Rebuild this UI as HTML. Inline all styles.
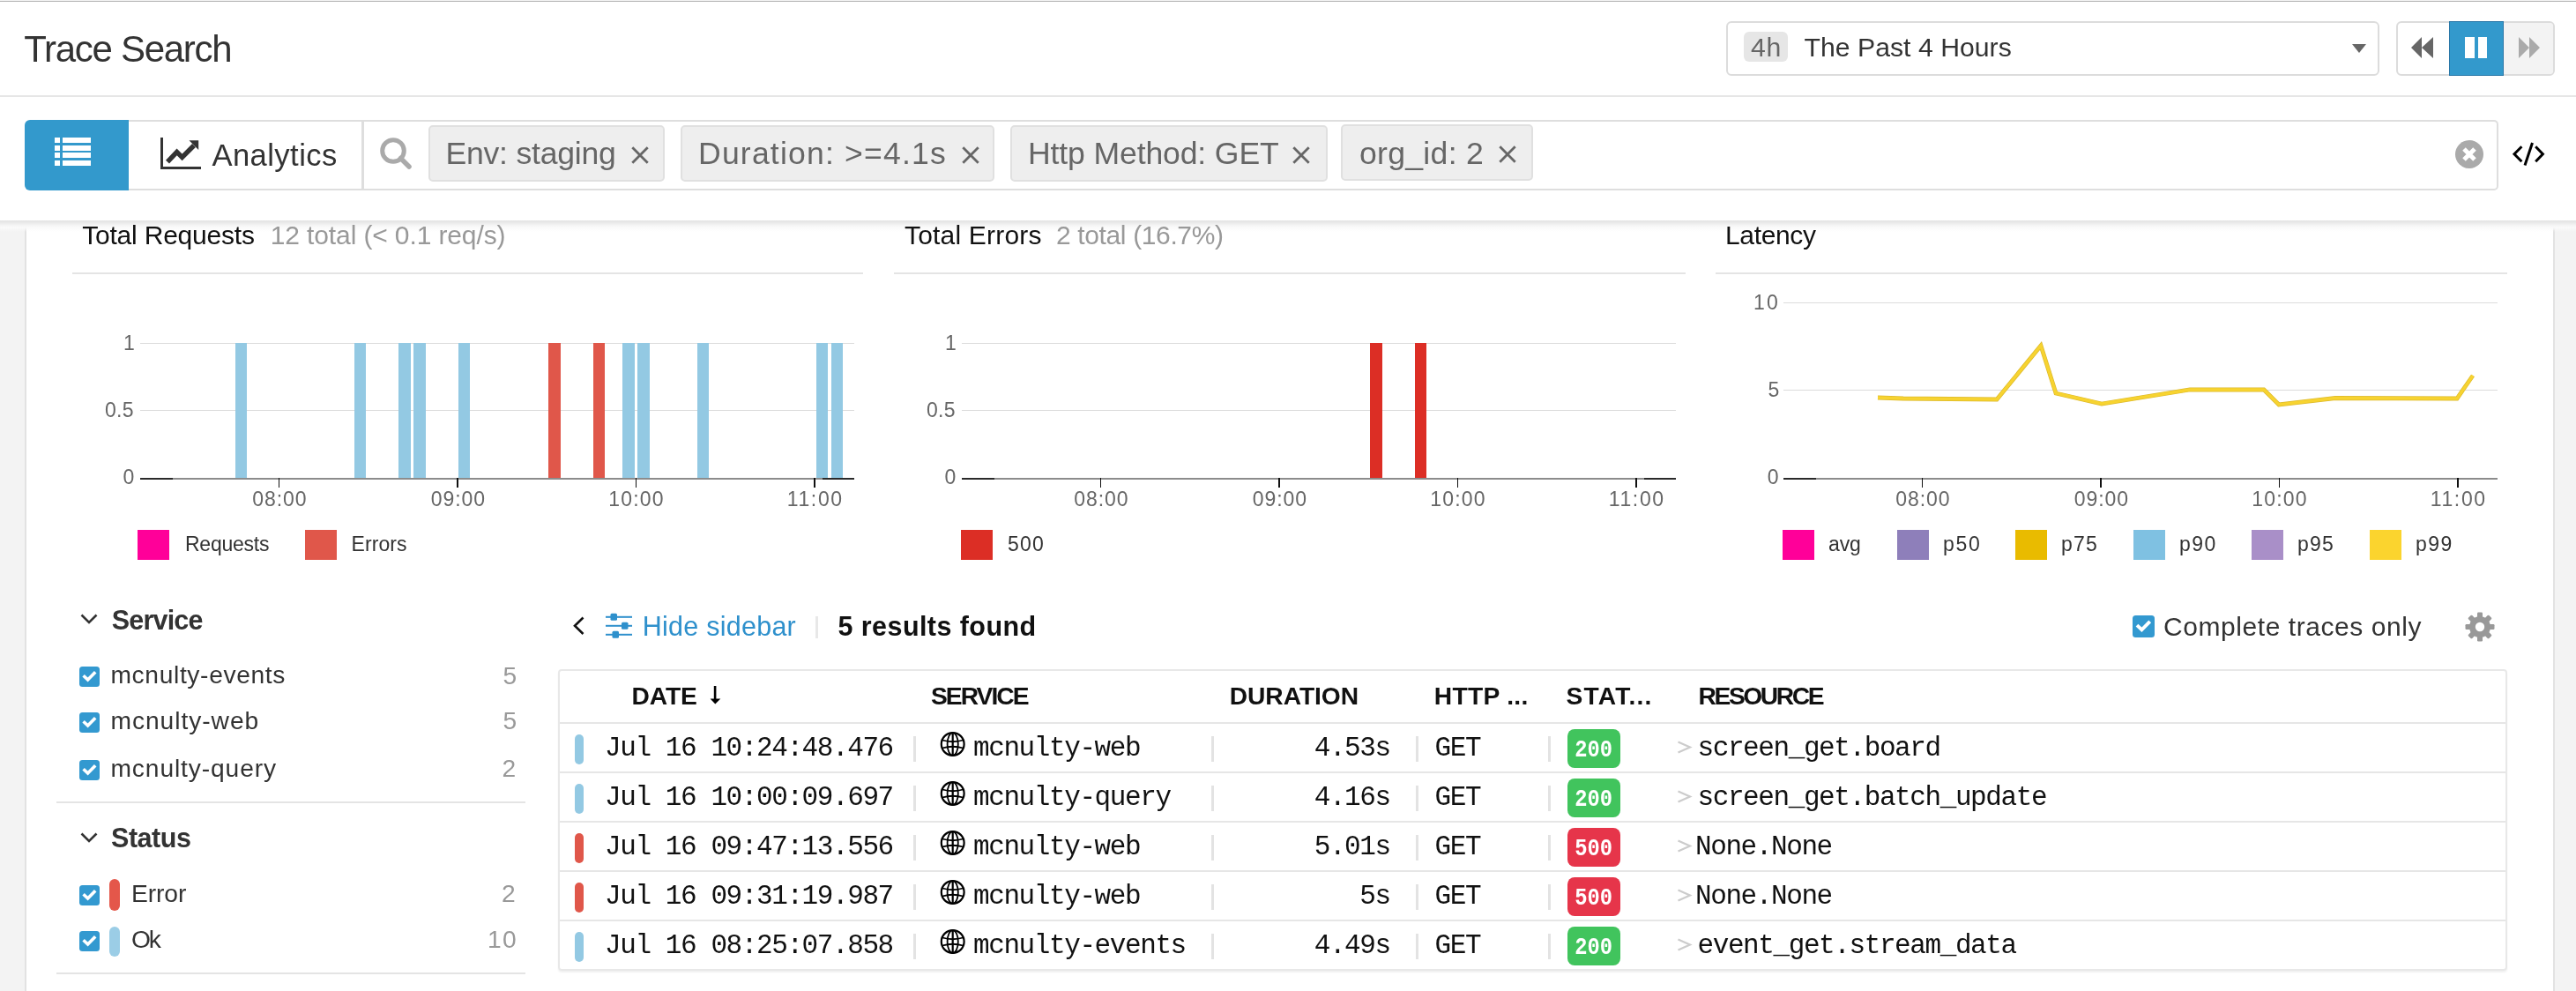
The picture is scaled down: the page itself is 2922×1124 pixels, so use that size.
<!DOCTYPE html>
<html><head><meta charset="utf-8"><title>Trace Search</title>
<style>
html,body{margin:0;padding:0;background:#fff;}
body{width:2922px;height:1124px;overflow:hidden;position:relative;font-family:"Liberation Sans", sans-serif;}
.a{position:absolute;box-sizing:border-box;}
.t{position:absolute;white-space:pre;font-family:"Liberation Sans", sans-serif;}
svg{position:absolute;overflow:visible;}
.m{font-family:"Liberation Mono", monospace;}
</style></head><body>
<!-- page background strips -->
<div class="a" style="left:0;top:250px;width:28px;height:874px;background:#f3f3f3;"></div>
<div class="a" style="left:28px;top:250px;width:2px;height:874px;background:#e2e2e2;"></div>
<div class="a" style="left:2896px;top:250px;width:2px;height:874px;background:#e2e2e2;"></div>
<div class="a" style="left:2898px;top:250px;width:24px;height:874px;background:#f3f3f3;"></div>
<!-- top line -->
<div class="a" style="left:0;top:0;width:2922px;height:1px;background:#f4f4f4;"></div>
<div class="a" style="left:0;top:1px;width:2922px;height:1px;background:#b4b4b4;"></div>
<!-- header bottom border -->
<div class="a" style="left:0;top:108px;width:2922px;height:2px;background:#e6e6e6;"></div>
<!-- toolbar shadow -->
<div class="a" style="left:0;top:250px;width:2922px;height:13px;background:linear-gradient(#e3e3e3 0px,#e9e9e9 2.5px,#f3f3f3 5px,#fafafa 8px,rgba(255,255,255,0) 13px);"></div>

<!-- time dropdown -->
<div class="a" style="left:1958px;top:24px;width:741px;height:62px;border:2px solid #dcdcdc;border-radius:6px;background:#fff;"></div>
<div class="a" style="left:1978px;top:36px;width:50px;height:34px;border-radius:6px;background:#e6e6e6;"></div>
<svg style="left:2668px;top:50px" width="16" height="10"><path d="M0 0H16L8 10Z" fill="#666"/></svg>
<!-- playback -->
<div class="a" style="left:2718px;top:24px;width:180px;height:62px;border:2px solid #dcdcdc;border-radius:6px;background:#fff;overflow:hidden;">
  <div class="a" style="left:120px;top:-2px;width:60px;height:62px;background:#f3f3f3;"></div>
</div>
<div class="a" style="left:2778px;top:24px;width:62px;height:62px;background:#3399cc;border:1px solid #2a78a8;"></div>
<svg style="left:2735px;top:42px" width="26" height="24"><path d="M0 12L12 0V24Z M12 12L25 0V24Z" fill="#666"/></svg>
<div class="a" style="left:2796px;top:42px;width:11px;height:24px;background:#fff;"></div>
<div class="a" style="left:2811px;top:42px;width:10px;height:24px;background:#fff;"></div>
<svg style="left:2857px;top:42px" width="26" height="24"><path d="M0 0L12 12L0 24Z M12 0L24 12L12 24Z" fill="#aaa"/></svg>

<!-- toolbar -->
<div class="a" style="left:28px;top:136px;width:118px;height:80px;background:#3399cc;border-radius:6px 0 0 6px;"></div>
<svg style="left:62px;top:156px" width="42" height="33" fill="#fff">
  <rect x="0" y="0" width="6" height="6"/><rect x="9" y="0" width="32" height="6"/>
  <rect x="0" y="9" width="6" height="6"/><rect x="9" y="9" width="32" height="6"/>
  <rect x="0" y="17" width="6" height="6"/><rect x="9" y="17" width="32" height="6"/>
  <rect x="0" y="26" width="6" height="6"/><rect x="9" y="26" width="32" height="6"/>
</svg>
<div class="a" style="left:146px;top:136px;width:267px;height:80px;border-top:2px solid #dedede;border-bottom:2px solid #dedede;border-right:3px solid #dedede;"></div>
<svg style="left:182px;top:156px" width="48" height="36">
  <path d="M1.5 0V34.5H46" fill="none" stroke="#333" stroke-width="3"/>
  <path d="M8 27.6L18.6 16.4L24.6 22.4L38 9" fill="none" stroke="#333" stroke-width="5.5"/>
  <path d="M32.5 3.3H43.2V14Z" fill="#333"/>
</svg>
<div class="a" style="left:413px;top:136px;width:2421px;height:80px;border:2px solid #dedede;border-left:none;border-radius:0 5px 5px 0;"></div>
<svg style="left:430px;top:155px" width="40" height="40">
  <circle cx="16" cy="16" r="12.3" fill="none" stroke="#aaa" stroke-width="5"/>
  <path d="M24.5 24.5L34 34" stroke="#aaa" stroke-width="5.5" stroke-linecap="round"/>
</svg>
<!-- tags -->
<div class="a" style="left:486px;top:142px;width:268px;height:64px;background:#eeeeee;border:2px solid #e0e0e0;border-radius:5px;"></div>
<div class="a" style="left:772px;top:142px;width:356px;height:64px;background:#eeeeee;border:2px solid #e0e0e0;border-radius:5px;"></div>
<div class="a" style="left:1146px;top:142px;width:360px;height:64px;background:#eeeeee;border:2px solid #e0e0e0;border-radius:5px;"></div>
<div class="a" style="left:1521px;top:141px;width:218px;height:64px;background:#eeeeee;border:2px solid #e0e0e0;border-radius:5px;"></div>
<svg style="left:716.0px;top:166.0px" width="20" height="20"><path d="M1.3 1.3L18.7 18.7M18.7 1.3L1.3 18.7" stroke="#666" stroke-width="2.8"/></svg>
<svg style="left:1090.5px;top:166.0px" width="20" height="20"><path d="M1.3 1.3L18.7 18.7M18.7 1.3L1.3 18.7" stroke="#666" stroke-width="2.8"/></svg>
<svg style="left:1466.0px;top:166.0px" width="20" height="20"><path d="M1.3 1.3L18.7 18.7M18.7 1.3L1.3 18.7" stroke="#666" stroke-width="2.8"/></svg>
<svg style="left:1700.2px;top:165.0px" width="20" height="20"><path d="M1.3 1.3L18.7 18.7M18.7 1.3L1.3 18.7" stroke="#666" stroke-width="2.8"/></svg>
<!-- clear icon -->
<svg style="left:2785px;top:159px" width="32" height="32">
  <circle cx="16" cy="16" r="16" fill="#aaa"/>
  <path d="M10 10L22 22M22 10L10 22" stroke="#fff" stroke-width="5"/>
</svg>
<!-- code icon -->
<svg style="left:2849px;top:161px" width="40" height="28">
  <path d="M11.4 5.3L3 13.7L11.4 22.3" fill="none" stroke="#000" stroke-width="3"/>
  <path d="M23.5 1L15 26.5" fill="none" stroke="#000" stroke-width="3"/>
  <path d="M27.2 5.3L35.4 13.7L27.2 22.3" fill="none" stroke="#000" stroke-width="3"/>
</svg>

<!-- chart dividers -->
<div class="a" style="left:82px;top:309px;width:897px;height:2px;background:#e4e4e4;"></div>
<div class="a" style="left:1014px;top:309px;width:898px;height:2px;background:#e4e4e4;"></div>
<div class="a" style="left:1946px;top:309px;width:898px;height:2px;background:#e4e4e4;"></div>
<div class="a" style="left:159px;top:389px;width:810px;height:1px;background:#dcdcdc;"></div>
<div class="a" style="left:159px;top:465px;width:810px;height:1px;background:#dcdcdc;"></div>
<div class="a" style="left:159px;top:542px;width:810px;height:1.5px;background:#8c8c8c;"></div>
<div class="a" style="left:159px;top:542px;width:37px;height:1.5px;background:#2a2a2a;"></div>
<div class="a" style="left:933px;top:542px;width:36px;height:1.5px;background:#2a2a2a;"></div>
<div class="a" style="left:315.8px;top:542px;width:1.5px;height:11px;background:#111;"></div>
<div class="a" style="left:518.2px;top:542px;width:1.5px;height:11px;background:#111;"></div>
<div class="a" style="left:720.8px;top:542px;width:1.5px;height:11px;background:#111;"></div>
<div class="a" style="left:923.2px;top:542px;width:1.5px;height:11px;background:#111;"></div>
<div class="a" style="left:267.0px;top:389px;width:13.0px;height:152.5px;background:#93c9e3;"></div>
<div class="a" style="left:401.5px;top:389px;width:13.5px;height:152.5px;background:#93c9e3;"></div>
<div class="a" style="left:452.0px;top:389px;width:13.5px;height:152.5px;background:#93c9e3;"></div>
<div class="a" style="left:469.0px;top:389px;width:13.5px;height:152.5px;background:#93c9e3;"></div>
<div class="a" style="left:520.0px;top:389px;width:13.0px;height:152.5px;background:#93c9e3;"></div>
<div class="a" style="left:622.0px;top:389px;width:13.5px;height:152.5px;background:#e0574a;"></div>
<div class="a" style="left:672.5px;top:389px;width:13.5px;height:152.5px;background:#e0574a;"></div>
<div class="a" style="left:706.0px;top:389px;width:13.5px;height:152.5px;background:#93c9e3;"></div>
<div class="a" style="left:723.0px;top:389px;width:13.5px;height:152.5px;background:#93c9e3;"></div>
<div class="a" style="left:790.5px;top:389px;width:13.5px;height:152.5px;background:#93c9e3;"></div>
<div class="a" style="left:925.5px;top:389px;width:13.5px;height:152.5px;background:#93c9e3;"></div>
<div class="a" style="left:942.5px;top:389px;width:13.5px;height:152.5px;background:#93c9e3;"></div>
<div class="a" style="left:1091px;top:389px;width:810px;height:1px;background:#dcdcdc;"></div>
<div class="a" style="left:1091px;top:465px;width:810px;height:1px;background:#dcdcdc;"></div>
<div class="a" style="left:1091px;top:542px;width:810px;height:1.5px;background:#8c8c8c;"></div>
<div class="a" style="left:1091px;top:542px;width:37px;height:1.5px;background:#2a2a2a;"></div>
<div class="a" style="left:1865px;top:542px;width:36px;height:1.5px;background:#2a2a2a;"></div>
<div class="a" style="left:1247.8px;top:542px;width:1.5px;height:11px;background:#111;"></div>
<div class="a" style="left:1450.2px;top:542px;width:1.5px;height:11px;background:#111;"></div>
<div class="a" style="left:1652.8px;top:542px;width:1.5px;height:11px;background:#111;"></div>
<div class="a" style="left:1855.2px;top:542px;width:1.5px;height:11px;background:#111;"></div>
<div class="a" style="left:1554.0px;top:389px;width:13.5px;height:152.5px;background:#dc2e25;"></div>
<div class="a" style="left:1604.5px;top:389px;width:13.5px;height:152.5px;background:#dc2e25;"></div>
<div class="a" style="left:2023px;top:343px;width:810px;height:1px;background:#dcdcdc;"></div>
<div class="a" style="left:2023px;top:442px;width:810px;height:1px;background:#dcdcdc;"></div>
<div class="a" style="left:2023px;top:542px;width:810px;height:1.5px;background:#8c8c8c;"></div>
<div class="a" style="left:2023px;top:542px;width:37px;height:1.5px;background:#2a2a2a;"></div>
<div class="a" style="left:2179.8px;top:542px;width:1.5px;height:11px;background:#111;"></div>
<div class="a" style="left:2382.2px;top:542px;width:1.5px;height:11px;background:#111;"></div>
<div class="a" style="left:2584.8px;top:542px;width:1.5px;height:11px;background:#111;"></div>
<div class="a" style="left:2787.2px;top:542px;width:1.5px;height:11px;background:#111;"></div>
<svg style="left:2000px;top:300px" width="900" height="250"><path d="M130 151 L159 152 L265 153 L315 92 L332 146 L384 158 L484 142 L568 142 L585 159 L649 151.5 L787 152 L805 126" fill="none" stroke="#dcb92c" stroke-width="4.8" stroke-linejoin="miter"/><path d="M130 151 L159 152 L265 153 L315 92 L332 146 L384 158 L484 142 L568 142 L585 159 L649 151.5 L787 152 L805 126" fill="none" stroke="#f7d330" stroke-width="3.4" stroke-linejoin="miter"/></svg>
<div class="a" style="left:156px;top:601px;width:36px;height:34px;background:#ff0099;"></div>
<div class="a" style="left:346px;top:601px;width:36px;height:34px;background:#e0574a;"></div>
<div class="a" style="left:1090px;top:601px;width:36px;height:34px;background:#dc2e25;"></div>
<div class="a" style="left:2022px;top:601px;width:36px;height:34px;background:#ff0099;"></div>
<div class="a" style="left:2152px;top:601px;width:36px;height:34px;background:#8e7fba;"></div>
<div class="a" style="left:2286px;top:601px;width:36px;height:34px;background:#e9bb00;"></div>
<div class="a" style="left:2420px;top:601px;width:36px;height:34px;background:#7fc1e2;"></div>
<div class="a" style="left:2554px;top:601px;width:36px;height:34px;background:#a98fc8;"></div>
<div class="a" style="left:2688px;top:601px;width:36px;height:34px;background:#fbd42e;"></div>
<svg style="left:91px;top:696px" width="20" height="12"><path d="M1.5 1.5L10 10L18.5 1.5" fill="none" stroke="#333" stroke-width="2.6"/></svg>
<svg style="left:91px;top:944px" width="20" height="12"><path d="M1.5 1.5L10 10L18.5 1.5" fill="none" stroke="#333" stroke-width="2.6"/></svg>
<svg style="left:90px;top:756px" width="23" height="23"><rect x="0" y="0" width="23" height="23" rx="3.5" fill="#3399d0"/><path d="M4.60 10.20 L9.60 15.00 L18.20 6.30" fill="none" stroke="#fff" stroke-width="3.60"/></svg>
<svg style="left:90px;top:808px" width="23" height="23"><rect x="0" y="0" width="23" height="23" rx="3.5" fill="#3399d0"/><path d="M4.60 10.20 L9.60 15.00 L18.20 6.30" fill="none" stroke="#fff" stroke-width="3.60"/></svg>
<svg style="left:90px;top:862px" width="23" height="23"><rect x="0" y="0" width="23" height="23" rx="3.5" fill="#3399d0"/><path d="M4.60 10.20 L9.60 15.00 L18.20 6.30" fill="none" stroke="#fff" stroke-width="3.60"/></svg>
<svg style="left:90px;top:1004px" width="23" height="23"><rect x="0" y="0" width="23" height="23" rx="3.5" fill="#3399d0"/><path d="M4.60 10.20 L9.60 15.00 L18.20 6.30" fill="none" stroke="#fff" stroke-width="3.60"/></svg>
<svg style="left:90px;top:1056px" width="23" height="23"><rect x="0" y="0" width="23" height="23" rx="3.5" fill="#3399d0"/><path d="M4.60 10.20 L9.60 15.00 L18.20 6.30" fill="none" stroke="#fff" stroke-width="3.60"/></svg>
<div class="a" style="left:124px;top:997px;width:12px;height:36px;border-radius:6px;background:#e4574a;"></div>
<div class="a" style="left:124px;top:1051px;width:12px;height:34px;border-radius:6px;background:#9bcde6;"></div>
<div class="a" style="left:64px;top:909px;width:532px;height:2px;background:#e4e4e4;"></div>
<div class="a" style="left:64px;top:1103px;width:532px;height:2px;background:#e4e4e4;"></div>
<svg style="left:649px;top:699px" width="15" height="22"><path d="M12.5 1.5L3 10.8L12.5 20" fill="none" stroke="#111" stroke-width="2.6"/></svg>
<svg style="left:687px;top:695px" width="31" height="30" fill="#2e90cc">
<rect x="0" y="3.8" width="30" height="2"/><rect x="0" y="13.8" width="30" height="2"/><rect x="0" y="23.8" width="30" height="2"/>
<rect x="5.5" y="0.8" width="7.5" height="8" rx="1.5"/><rect x="18" y="10.8" width="7.5" height="8" rx="1.5"/><rect x="7.5" y="20.8" width="7.5" height="8" rx="1.5"/>
</svg>
<div class="a" style="left:925px;top:699px;width:3px;height:25px;background:#e8e8e8;"></div>
<svg style="left:2419px;top:698px" width="25" height="25"><rect x="0" y="0" width="25" height="25" rx="3.5" fill="#3399d0"/><path d="M4.99 11.06 L10.41 16.26 L19.73 6.83" fill="none" stroke="#fff" stroke-width="3.90"/></svg>
<svg style="left:2796px;top:693.5px" width="34" height="34"><g fill="#999"><rect x="14" y="0.5" width="6" height="10" rx="1.2" transform="rotate(0 17 17)"/><rect x="14" y="0.5" width="6" height="10" rx="1.2" transform="rotate(45 17 17)"/><rect x="14" y="0.5" width="6" height="10" rx="1.2" transform="rotate(90 17 17)"/><rect x="14" y="0.5" width="6" height="10" rx="1.2" transform="rotate(135 17 17)"/><rect x="14" y="0.5" width="6" height="10" rx="1.2" transform="rotate(180 17 17)"/><rect x="14" y="0.5" width="6" height="10" rx="1.2" transform="rotate(225 17 17)"/><rect x="14" y="0.5" width="6" height="10" rx="1.2" transform="rotate(270 17 17)"/><rect x="14" y="0.5" width="6" height="10" rx="1.2" transform="rotate(315 17 17)"/><circle cx="17" cy="17" r="12"/></g><circle cx="17" cy="17" r="5.2" fill="#fff"/></svg>
<div class="a" style="left:633px;top:759px;width:2211px;height:342px;border:2px solid #e8e8e8;border-radius:4px;box-shadow:0 2px 2px rgba(0,0,0,0.06);"></div>
<div class="a" style="left:635px;top:819px;width:2207px;height:2px;background:#e6e6e6;"></div>
<div class="a" style="left:635px;top:875px;width:2207px;height:2px;background:#e6e6e6;"></div>
<div class="a" style="left:635px;top:931px;width:2207px;height:2px;background:#e6e6e6;"></div>
<div class="a" style="left:635px;top:987px;width:2207px;height:2px;background:#e6e6e6;"></div>
<div class="a" style="left:635px;top:1043px;width:2207px;height:2px;background:#e6e6e6;"></div>
<svg style="left:803px;top:777px" width="16" height="24"><rect x="6.8" y="1" width="2.6" height="15.5" fill="#000"/><path d="M2.6 15.6L14.3 15.6L8.3 21.6Z" fill="#000"/></svg>
<div class="a" style="left:652px;top:833px;width:10px;height:34px;border-radius:5px;background:#93c9e3;"></div>
<div class="a" style="left:1036px;top:835px;width:3px;height:29px;background:#e3e3e3;"></div>
<div class="a" style="left:1374px;top:835px;width:3px;height:29px;background:#e3e3e3;"></div>
<div class="a" style="left:1606px;top:835px;width:3px;height:29px;background:#e3e3e3;"></div>
<div class="a" style="left:1756px;top:835px;width:3px;height:29px;background:#e3e3e3;"></div>
<svg style="left:1066px;top:830px" width="30" height="30"><g fill="none" stroke="#000" stroke-width="2.2">
<circle cx="14.7" cy="14" r="12.9"/><path d="M14.7 1.2V26.8"/><ellipse cx="14.7" cy="14" rx="6.1" ry="12.9" stroke-width="1.8"/>
<path d="M3 9.5Q14.7 13 26.4 9.5M3 18.5Q14.7 15 26.4 18.5" stroke-width="1.8"/></g></svg>
<div class="a" style="left:1778px;top:827px;width:60px;height:44px;border-radius:8px;background:#41c45d;"></div>
<svg style="left:1902px;top:840px" width="17" height="16"><path d="M1.5 1.5L15 7.5L1.5 13.5" fill="none" stroke="#ccc" stroke-width="2.2"/></svg>
<div class="a" style="left:652px;top:889px;width:10px;height:34px;border-radius:5px;background:#93c9e3;"></div>
<div class="a" style="left:1036px;top:891px;width:3px;height:29px;background:#e3e3e3;"></div>
<div class="a" style="left:1374px;top:891px;width:3px;height:29px;background:#e3e3e3;"></div>
<div class="a" style="left:1606px;top:891px;width:3px;height:29px;background:#e3e3e3;"></div>
<div class="a" style="left:1756px;top:891px;width:3px;height:29px;background:#e3e3e3;"></div>
<svg style="left:1066px;top:886px" width="30" height="30"><g fill="none" stroke="#000" stroke-width="2.2">
<circle cx="14.7" cy="14" r="12.9"/><path d="M14.7 1.2V26.8"/><ellipse cx="14.7" cy="14" rx="6.1" ry="12.9" stroke-width="1.8"/>
<path d="M3 9.5Q14.7 13 26.4 9.5M3 18.5Q14.7 15 26.4 18.5" stroke-width="1.8"/></g></svg>
<div class="a" style="left:1778px;top:883px;width:60px;height:44px;border-radius:8px;background:#41c45d;"></div>
<svg style="left:1902px;top:896px" width="17" height="16"><path d="M1.5 1.5L15 7.5L1.5 13.5" fill="none" stroke="#ccc" stroke-width="2.2"/></svg>
<div class="a" style="left:652px;top:945px;width:10px;height:34px;border-radius:5px;background:#e0574a;"></div>
<div class="a" style="left:1036px;top:947px;width:3px;height:29px;background:#e3e3e3;"></div>
<div class="a" style="left:1374px;top:947px;width:3px;height:29px;background:#e3e3e3;"></div>
<div class="a" style="left:1606px;top:947px;width:3px;height:29px;background:#e3e3e3;"></div>
<div class="a" style="left:1756px;top:947px;width:3px;height:29px;background:#e3e3e3;"></div>
<svg style="left:1066px;top:942px" width="30" height="30"><g fill="none" stroke="#000" stroke-width="2.2">
<circle cx="14.7" cy="14" r="12.9"/><path d="M14.7 1.2V26.8"/><ellipse cx="14.7" cy="14" rx="6.1" ry="12.9" stroke-width="1.8"/>
<path d="M3 9.5Q14.7 13 26.4 9.5M3 18.5Q14.7 15 26.4 18.5" stroke-width="1.8"/></g></svg>
<div class="a" style="left:1778px;top:939px;width:60px;height:44px;border-radius:8px;background:#e6354a;"></div>
<svg style="left:1902px;top:952px" width="17" height="16"><path d="M1.5 1.5L15 7.5L1.5 13.5" fill="none" stroke="#ccc" stroke-width="2.2"/></svg>
<div class="a" style="left:652px;top:1001px;width:10px;height:34px;border-radius:5px;background:#e0574a;"></div>
<div class="a" style="left:1036px;top:1003px;width:3px;height:29px;background:#e3e3e3;"></div>
<div class="a" style="left:1374px;top:1003px;width:3px;height:29px;background:#e3e3e3;"></div>
<div class="a" style="left:1606px;top:1003px;width:3px;height:29px;background:#e3e3e3;"></div>
<div class="a" style="left:1756px;top:1003px;width:3px;height:29px;background:#e3e3e3;"></div>
<svg style="left:1066px;top:998px" width="30" height="30"><g fill="none" stroke="#000" stroke-width="2.2">
<circle cx="14.7" cy="14" r="12.9"/><path d="M14.7 1.2V26.8"/><ellipse cx="14.7" cy="14" rx="6.1" ry="12.9" stroke-width="1.8"/>
<path d="M3 9.5Q14.7 13 26.4 9.5M3 18.5Q14.7 15 26.4 18.5" stroke-width="1.8"/></g></svg>
<div class="a" style="left:1778px;top:995px;width:60px;height:44px;border-radius:8px;background:#e6354a;"></div>
<svg style="left:1902px;top:1008px" width="17" height="16"><path d="M1.5 1.5L15 7.5L1.5 13.5" fill="none" stroke="#ccc" stroke-width="2.2"/></svg>
<div class="a" style="left:652px;top:1057px;width:10px;height:34px;border-radius:5px;background:#93c9e3;"></div>
<div class="a" style="left:1036px;top:1059px;width:3px;height:29px;background:#e3e3e3;"></div>
<div class="a" style="left:1374px;top:1059px;width:3px;height:29px;background:#e3e3e3;"></div>
<div class="a" style="left:1606px;top:1059px;width:3px;height:29px;background:#e3e3e3;"></div>
<div class="a" style="left:1756px;top:1059px;width:3px;height:29px;background:#e3e3e3;"></div>
<svg style="left:1066px;top:1054px" width="30" height="30"><g fill="none" stroke="#000" stroke-width="2.2">
<circle cx="14.7" cy="14" r="12.9"/><path d="M14.7 1.2V26.8"/><ellipse cx="14.7" cy="14" rx="6.1" ry="12.9" stroke-width="1.8"/>
<path d="M3 9.5Q14.7 13 26.4 9.5M3 18.5Q14.7 15 26.4 18.5" stroke-width="1.8"/></g></svg>
<div class="a" style="left:1778px;top:1051px;width:60px;height:44px;border-radius:8px;background:#41c45d;"></div>
<svg style="left:1902px;top:1064px" width="17" height="16"><path d="M1.5 1.5L15 7.5L1.5 13.5" fill="none" stroke="#ccc" stroke-width="2.2"/></svg>
<div style="position:absolute;left:0;top:0;width:2922px;height:1124px;will-change:transform;">
<span class="t" style="left:27.25px;top:35.00px;font-size:42.00px;line-height:42.00px;color:#333;letter-spacing:-1.290px;">Trace Search</span>
<span class="t" style="left:1986.00px;top:38.90px;font-size:30.20px;line-height:30.20px;color:#666;letter-spacing:0.811px;">4h</span>
<span class="t" style="left:2046.50px;top:38.90px;font-size:30.20px;line-height:30.20px;color:#333;letter-spacing:0.026px;">The Past 4 Hours</span>
<span class="t" style="left:240.40px;top:158.90px;font-size:34.60px;line-height:34.60px;color:#333;letter-spacing:0.441px;">Analytics</span>
<span class="t" style="left:505.50px;top:157.00px;font-size:35.60px;line-height:35.60px;color:#666;letter-spacing:-0.229px;">Env: staging</span>
<span class="t" style="left:792.00px;top:157.00px;font-size:35.60px;line-height:35.60px;color:#666;letter-spacing:1.183px;">Duration: &gt;=4.1s</span>
<span class="t" style="left:1166.00px;top:157.00px;font-size:35.60px;line-height:35.60px;color:#666;letter-spacing:-0.132px;">Http Method: GET</span>
<span class="t" style="left:1542.00px;top:157.00px;font-size:35.60px;line-height:35.60px;color:#666;letter-spacing:0.291px;">org_id: 2</span>
<span class="t" style="left:93.20px;top:252.00px;font-size:30.00px;line-height:30.00px;color:#111;letter-spacing:-0.203px;">Total Requests</span>
<span class="t" style="left:306.75px;top:252.00px;font-size:30.00px;line-height:30.00px;color:#999;letter-spacing:-0.122px;">12 total (&lt; 0.1 req/s)</span>
<span class="t" style="left:1026.00px;top:252.00px;font-size:30.00px;line-height:30.00px;color:#111;letter-spacing:0.194px;">Total Errors</span>
<span class="t" style="left:1198.00px;top:252.00px;font-size:30.00px;line-height:30.00px;color:#999;letter-spacing:-0.365px;">2 total (16.7%)</span>
<span class="t" style="left:1957.00px;top:252.00px;font-size:30.00px;line-height:30.00px;color:#111;letter-spacing:-0.346px;">Latency</span>
<span class="t" style="left:140.00px;top:377.70px;font-size:23.00px;line-height:23.00px;color:#666;letter-spacing:0.000px;">1</span>
<span class="t" style="left:119.00px;top:453.70px;font-size:23.00px;line-height:23.00px;color:#666;letter-spacing:0.259px;">0.5</span>
<span class="t" style="left:139.50px;top:530.00px;font-size:23.00px;line-height:23.00px;color:#666;letter-spacing:0.000px;">0</span>
<span class="t" style="left:1072.00px;top:377.70px;font-size:23.00px;line-height:23.00px;color:#666;letter-spacing:0.000px;">1</span>
<span class="t" style="left:1051.00px;top:453.70px;font-size:23.00px;line-height:23.00px;color:#666;letter-spacing:0.259px;">0.5</span>
<span class="t" style="left:1071.50px;top:530.00px;font-size:23.00px;line-height:23.00px;color:#666;letter-spacing:0.000px;">0</span>
<span class="t" style="left:1989.00px;top:331.70px;font-size:23.00px;line-height:23.00px;color:#666;letter-spacing:2.208px;">10</span>
<span class="t" style="left:2005.50px;top:431.20px;font-size:23.00px;line-height:23.00px;color:#666;letter-spacing:0.000px;">5</span>
<span class="t" style="left:2004.80px;top:530.00px;font-size:23.00px;line-height:23.00px;color:#666;letter-spacing:0.000px;">0</span>
<span class="t" style="left:286.15px;top:555.40px;font-size:23.00px;line-height:23.00px;color:#666;letter-spacing:0.984px;">08:00</span>
<span class="t" style="left:488.65px;top:555.40px;font-size:23.00px;line-height:23.00px;color:#666;letter-spacing:0.984px;">09:00</span>
<span class="t" style="left:690.15px;top:555.40px;font-size:23.00px;line-height:23.00px;color:#666;letter-spacing:1.234px;">10:00</span>
<span class="t" style="left:892.65px;top:555.40px;font-size:23.00px;line-height:23.00px;color:#666;letter-spacing:1.661px;">11:00</span>
<span class="t" style="left:1218.15px;top:555.40px;font-size:23.00px;line-height:23.00px;color:#666;letter-spacing:0.984px;">08:00</span>
<span class="t" style="left:1420.65px;top:555.40px;font-size:23.00px;line-height:23.00px;color:#666;letter-spacing:0.984px;">09:00</span>
<span class="t" style="left:1622.15px;top:555.40px;font-size:23.00px;line-height:23.00px;color:#666;letter-spacing:1.234px;">10:00</span>
<span class="t" style="left:1824.65px;top:555.40px;font-size:23.00px;line-height:23.00px;color:#666;letter-spacing:1.661px;">11:00</span>
<span class="t" style="left:2150.15px;top:555.40px;font-size:23.00px;line-height:23.00px;color:#666;letter-spacing:0.984px;">08:00</span>
<span class="t" style="left:2352.65px;top:555.40px;font-size:23.00px;line-height:23.00px;color:#666;letter-spacing:0.984px;">09:00</span>
<span class="t" style="left:2554.15px;top:555.40px;font-size:23.00px;line-height:23.00px;color:#666;letter-spacing:1.234px;">10:00</span>
<span class="t" style="left:2756.65px;top:555.40px;font-size:23.00px;line-height:23.00px;color:#666;letter-spacing:1.661px;">11:00</span>
<span class="t" style="left:210.00px;top:605.75px;font-size:23.00px;line-height:23.00px;color:#333;letter-spacing:-0.238px;">Requests</span>
<span class="t" style="left:398.50px;top:605.75px;font-size:23.00px;line-height:23.00px;color:#333;letter-spacing:0.078px;">Errors</span>
<span class="t" style="left:1143.00px;top:605.75px;font-size:23.00px;line-height:23.00px;color:#333;letter-spacing:1.208px;">500</span>
<span class="t" style="left:2074.00px;top:605.75px;font-size:23.00px;line-height:23.00px;color:#333;letter-spacing:-0.146px;">avg</span>
<span class="t" style="left:2204.00px;top:605.75px;font-size:23.00px;line-height:23.00px;color:#333;letter-spacing:1.708px;">p50</span>
<span class="t" style="left:2338.00px;top:605.75px;font-size:23.00px;line-height:23.00px;color:#333;letter-spacing:1.208px;">p75</span>
<span class="t" style="left:2472.00px;top:605.75px;font-size:23.00px;line-height:23.00px;color:#333;letter-spacing:1.458px;">p90</span>
<span class="t" style="left:2606.00px;top:605.75px;font-size:23.00px;line-height:23.00px;color:#333;letter-spacing:1.208px;">p95</span>
<span class="t" style="left:2740.00px;top:605.75px;font-size:23.00px;line-height:23.00px;color:#333;letter-spacing:1.458px;">p99</span>
<span class="t" style="left:126.80px;top:687.75px;font-size:30.50px;line-height:30.50px;color:#333;letter-spacing:-0.812px;font-weight:bold;">Service</span>
<span class="t" style="left:125.50px;top:751.40px;font-size:28.20px;line-height:28.20px;color:#333;letter-spacing:0.642px;">mcnulty-events</span>
<span class="t" style="left:125.50px;top:803.30px;font-size:28.20px;line-height:28.20px;color:#333;letter-spacing:0.947px;">mcnulty-web</span>
<span class="t" style="left:125.50px;top:857.20px;font-size:28.20px;line-height:28.20px;color:#333;letter-spacing:0.882px;">mcnulty-query</span>
<span class="t" style="left:570.60px;top:751.60px;font-size:28.20px;line-height:28.20px;color:#999;letter-spacing:0.000px;">5</span>
<span class="t" style="left:570.60px;top:803.30px;font-size:28.20px;line-height:28.20px;color:#999;letter-spacing:0.000px;">5</span>
<span class="t" style="left:569.50px;top:857.20px;font-size:28.20px;line-height:28.20px;color:#999;letter-spacing:0.000px;">2</span>
<span class="t" style="left:126.00px;top:935.00px;font-size:30.50px;line-height:30.50px;color:#333;letter-spacing:-0.450px;font-weight:bold;">Status</span>
<span class="t" style="left:148.90px;top:999.20px;font-size:28.20px;line-height:28.20px;color:#333;letter-spacing:-0.038px;">Error</span>
<span class="t" style="left:149.00px;top:1051.00px;font-size:28.20px;line-height:28.20px;color:#333;letter-spacing:-2.175px;">Ok</span>
<span class="t" style="left:569.00px;top:999.20px;font-size:28.20px;line-height:28.20px;color:#999;letter-spacing:0.000px;">2</span>
<span class="t" style="left:553.00px;top:1051.00px;font-size:28.20px;line-height:28.20px;color:#999;letter-spacing:1.323px;">10</span>
<span class="t" style="left:728.80px;top:695.25px;font-size:30.50px;line-height:30.50px;color:#2e90cc;letter-spacing:0.247px;">Hide sidebar</span>
<span class="t" style="left:950.50px;top:695.25px;font-size:30.50px;line-height:30.50px;color:#111;letter-spacing:0.430px;font-weight:bold;">5 results found</span>
<span class="t" style="left:2454.00px;top:696.00px;font-size:30.00px;line-height:30.00px;color:#333;letter-spacing:0.564px;">Complete traces only</span>
<span class="t" style="left:716.50px;top:775.40px;font-size:28.20px;line-height:28.20px;color:#111;letter-spacing:-0.112px;font-weight:bold;">DATE</span>
<span class="t" style="left:1056.00px;top:775.40px;font-size:28.20px;line-height:28.20px;color:#111;letter-spacing:-1.948px;font-weight:bold;">SERVICE</span>
<span class="t" style="left:1394.75px;top:775.40px;font-size:28.20px;line-height:28.20px;color:#111;letter-spacing:-0.044px;font-weight:bold;">DURATION</span>
<span class="t" style="left:1626.75px;top:775.40px;font-size:28.20px;line-height:28.20px;color:#111;letter-spacing:0.309px;font-weight:bold;">HTTP ...</span>
<span class="t" style="left:1776.50px;top:775.40px;font-size:28.20px;line-height:28.20px;color:#111;letter-spacing:1.176px;font-weight:bold;">STAT...</span>
<span class="t" style="left:1926.50px;top:775.40px;font-size:28.20px;line-height:28.20px;color:#111;letter-spacing:-2.386px;font-weight:bold;">RESOURCE</span>
<span class="t m" style="left:686.00px;top:833.25px;font-size:31.00px;line-height:31.00px;color:#111;letter-spacing:-1.403px;">Jul 16 10:24:48.476</span>
<span class="t m" style="left:1104.00px;top:833.25px;font-size:31.00px;line-height:31.00px;color:#111;letter-spacing:-1.403px;">mcnulty-web</span>
<span class="t m" style="left:1490.70px;top:833.25px;font-size:31.00px;line-height:31.00px;color:#111;letter-spacing:-1.403px;">4.53s</span>
<span class="t m" style="left:1627.50px;top:833.25px;font-size:31.00px;line-height:31.00px;color:#111;letter-spacing:-1.403px;">GET</span>
<span class="t m" style="left:1785.60px;top:836.50px;font-size:28.00px;line-height:28.00px;color:#fff;letter-spacing:0.000px;font-weight:bold;transform:scaleX(0.8497);transform-origin:1.00px 0;">200</span>
<span class="t m" style="left:1925.50px;top:833.25px;font-size:31.00px;line-height:31.00px;color:#111;letter-spacing:-1.403px;">screen_get.board</span>
<span class="t m" style="left:686.00px;top:889.25px;font-size:31.00px;line-height:31.00px;color:#111;letter-spacing:-1.403px;">Jul 16 10:00:09.697</span>
<span class="t m" style="left:1104.00px;top:889.25px;font-size:31.00px;line-height:31.00px;color:#111;letter-spacing:-1.403px;">mcnulty-query</span>
<span class="t m" style="left:1490.70px;top:889.25px;font-size:31.00px;line-height:31.00px;color:#111;letter-spacing:-1.403px;">4.16s</span>
<span class="t m" style="left:1627.50px;top:889.25px;font-size:31.00px;line-height:31.00px;color:#111;letter-spacing:-1.403px;">GET</span>
<span class="t m" style="left:1785.60px;top:892.50px;font-size:28.00px;line-height:28.00px;color:#fff;letter-spacing:0.000px;font-weight:bold;transform:scaleX(0.8497);transform-origin:1.00px 0;">200</span>
<span class="t m" style="left:1925.50px;top:889.25px;font-size:31.00px;line-height:31.00px;color:#111;letter-spacing:-1.403px;">screen_get.batch_update</span>
<span class="t m" style="left:686.00px;top:945.25px;font-size:31.00px;line-height:31.00px;color:#111;letter-spacing:-1.403px;">Jul 16 09:47:13.556</span>
<span class="t m" style="left:1104.00px;top:945.25px;font-size:31.00px;line-height:31.00px;color:#111;letter-spacing:-1.403px;">mcnulty-web</span>
<span class="t m" style="left:1490.70px;top:945.25px;font-size:31.00px;line-height:31.00px;color:#111;letter-spacing:-1.403px;">5.01s</span>
<span class="t m" style="left:1627.50px;top:945.25px;font-size:31.00px;line-height:31.00px;color:#111;letter-spacing:-1.403px;">GET</span>
<span class="t m" style="left:1785.60px;top:948.50px;font-size:28.00px;line-height:28.00px;color:#fff;letter-spacing:0.000px;font-weight:bold;transform:scaleX(0.8497);transform-origin:1.00px 0;">500</span>
<span class="t m" style="left:1923.00px;top:945.25px;font-size:31.00px;line-height:31.00px;color:#111;letter-spacing:-1.403px;">None.None</span>
<span class="t m" style="left:686.00px;top:1001.25px;font-size:31.00px;line-height:31.00px;color:#111;letter-spacing:-1.403px;">Jul 16 09:31:19.987</span>
<span class="t m" style="left:1104.00px;top:1001.25px;font-size:31.00px;line-height:31.00px;color:#111;letter-spacing:-1.403px;">mcnulty-web</span>
<span class="t m" style="left:1542.30px;top:1001.25px;font-size:31.00px;line-height:31.00px;color:#111;letter-spacing:-1.403px;">5s</span>
<span class="t m" style="left:1627.50px;top:1001.25px;font-size:31.00px;line-height:31.00px;color:#111;letter-spacing:-1.403px;">GET</span>
<span class="t m" style="left:1785.60px;top:1004.50px;font-size:28.00px;line-height:28.00px;color:#fff;letter-spacing:0.000px;font-weight:bold;transform:scaleX(0.8497);transform-origin:1.00px 0;">500</span>
<span class="t m" style="left:1923.00px;top:1001.25px;font-size:31.00px;line-height:31.00px;color:#111;letter-spacing:-1.403px;">None.None</span>
<span class="t m" style="left:686.00px;top:1057.25px;font-size:31.00px;line-height:31.00px;color:#111;letter-spacing:-1.403px;">Jul 16 08:25:07.858</span>
<span class="t m" style="left:1104.00px;top:1057.25px;font-size:31.00px;line-height:31.00px;color:#111;letter-spacing:-1.403px;">mcnulty-events</span>
<span class="t m" style="left:1490.70px;top:1057.25px;font-size:31.00px;line-height:31.00px;color:#111;letter-spacing:-1.403px;">4.49s</span>
<span class="t m" style="left:1627.50px;top:1057.25px;font-size:31.00px;line-height:31.00px;color:#111;letter-spacing:-1.403px;">GET</span>
<span class="t m" style="left:1785.60px;top:1060.50px;font-size:28.00px;line-height:28.00px;color:#fff;letter-spacing:0.000px;font-weight:bold;transform:scaleX(0.8497);transform-origin:1.00px 0;">200</span>
<span class="t m" style="left:1925.50px;top:1057.25px;font-size:31.00px;line-height:31.00px;color:#111;letter-spacing:-1.403px;">event_get.stream_data</span>
</div>
</body></html>
